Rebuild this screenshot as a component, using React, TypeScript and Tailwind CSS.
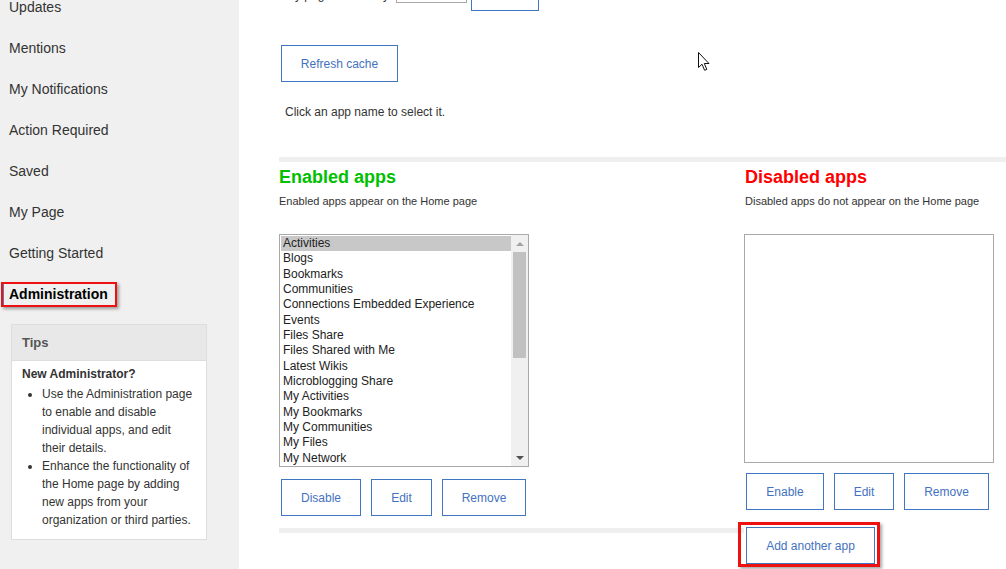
import React from "react";

const navItems = [
  "Updates",
  "Mentions",
  "My Notifications",
  "Action Required",
  "Saved",
  "My Page",
  "Getting Started",
];

const apps = [
  "Activities",
  "Blogs",
  "Bookmarks",
  "Communities",
  "Connections Embedded Experience",
  "Events",
  "Files Share",
  "Files Shared with Me",
  "Latest Wikis",
  "Microblogging Share",
  "My Activities",
  "My Bookmarks",
  "My Communities",
  "My Files",
  "My Network",
];

const btn =
  "h-[37px] border border-[#4176c0] bg-white text-[12px] text-[#4472c0] flex items-center justify-center shrink-0";

export default function App() {
  return (
    <div
      className="flex h-[569px] w-[1006px] overflow-hidden bg-white text-[#333]"
      style={{ fontFamily: '"Liberation Sans", Arial, sans-serif' }}
    >
      {/* Sidebar */}
      <aside className="w-[239px] shrink-0 bg-[#f0f0f0]">
        <div className="mt-[-13px]">
          {navItems.map((n) => (
            <div key={n} className="h-[41px] flex items-center pl-[9px] text-[14px] text-[#333]">
              {n}
            </div>
          ))}
        </div>
        <div className="mt-[8px] ml-[1px] w-[116px] h-[25px] border-2 border-[#ee1111] shadow-[2px_2px_3px_rgba(0,0,0,0.35)] flex items-center">
          <div className="h-full w-[1px] bg-[#5a78b0]" />
          <span className="ml-[5px] text-[14px] font-bold text-black">Administration</span>
        </div>
        <div className="mt-[17px] ml-[11px] w-[196px] border border-[#dddddd] bg-white">
          <div className="h-[36px] bg-[#e8e8e8] border-b border-[#dddddd] flex items-center pl-[10px] text-[13px] font-bold text-[#555]">
            Tips
          </div>
          <div className="pl-[10px] pr-[13px] pt-[4px] pb-[10px] text-[12px] leading-[18px] text-[#333]">
            <div className="font-bold">New Administrator?</div>
            <ul className="mt-[2px] list-disc pl-[20px]">
              <li>
                Use the Administration page to enable and disable individual apps, and edit their details.
              </li>
              <li>
                Enhance the functionality of the Home page by adding new apps from your organization or third
                parties.
              </li>
            </ul>
          </div>
        </div>
      </aside>

      {/* Main */}
      <main className="relative flex-1 bg-white">
        <div className="pl-[40px]">
          {/* partially visible top row */}
          <div className="mt-[-26px] h-[37px] flex items-end">
            <span className="ml-[6px] w-[111px] mb-[9px] text-[12px] leading-[14px] whitespace-nowrap">
              My page load delay:
            </span>
            <div className="mb-[8px] w-[71px] h-[22px] border border-[#a9a9a9] bg-white" />
            <div className={btn + " ml-[4px] w-[68px]"} />
          </div>

          <div className={btn + " mt-[34px] ml-[2px] w-[117px]"}>Refresh cache</div>

          <p className="mt-[23px] ml-[6px] text-[12px] leading-[14px] text-[#333]">
            Click an app name to select it.
          </p>

          <div className="mt-[38px] h-[5px] bg-[#efefef]" />

          <div className="flex">
            {/* Enabled */}
            <div className="w-[465px] shrink-0">
              <h2 className="mt-[4px] h-[22px] leading-[22px] text-[18px] font-bold text-[#00c000]">
                Enabled apps
              </h2>
              <p className="mt-[7px] text-[11px] leading-[13px] text-[#333]">
                Enabled apps appear on the Home page
              </p>
              <div className="mt-[26px] w-[250px] h-[233px] border border-[#a9a9a9] bg-white flex">
                <div className="flex-1 pt-[1px] pl-[1px]">
                  {apps.map((a, i) => (
                    <div
                      key={a}
                      className={
                        "h-[15.33px] leading-[15.33px] pl-[2px] text-[12px] text-[#222] whitespace-nowrap " +
                        (i === 0 ? "bg-[#c8c8c8]" : "")
                      }
                    >
                      {a}
                    </div>
                  ))}
                </div>
                <div className="w-[17px] h-full bg-[#f0f0f0] flex flex-col">
                  <div className="h-[17px] flex items-center justify-center">
                    <div className="w-0 h-0 border-l-[4px] border-r-[4px] border-b-[4px] border-l-transparent border-r-transparent border-b-[#a3a3a3]" />
                  </div>
                  <div className="ml-[2px] w-[13px] h-[106px] bg-[#c1c1c1]" />
                  <div className="flex-1" />
                  <div className="h-[17px] flex items-center justify-center">
                    <div className="w-0 h-0 border-l-[4px] border-r-[4px] border-t-[4px] border-l-transparent border-r-transparent border-t-[#505050]" />
                  </div>
                </div>
              </div>
              <div className="mt-[12px] flex">
                <div className={btn + " ml-[2px] w-[80px]"}>Disable</div>
                <div className={btn + " ml-[10px] w-[61px]"}>Edit</div>
                <div className={btn + " ml-[10px] w-[84px]"}>Remove</div>
              </div>
              <div className="mt-[12px] h-[5px] bg-[#efefef]" />
            </div>

            {/* Disabled */}
            <div className="flex-1">
              <h2 className="mt-[4px] ml-[1px] h-[22px] leading-[22px] text-[18px] font-bold text-[#ff0000]">
                Disabled apps
              </h2>
              <p className="mt-[7px] ml-[1px] text-[11px] leading-[13px] text-[#333]">
                Disabled apps do not appear on the Home page
              </p>
              <div className="mt-[26px] w-[250px] h-[229px] border border-[#a9a9a9] bg-white" />
              <div className="mt-[10px] flex">
                <div className={btn + " ml-[2px] w-[78px]"}>Enable</div>
                <div className={btn + " ml-[10px] w-[60px]"}>Edit</div>
                <div className={btn + " ml-[10px] w-[85px]"}>Remove</div>
              </div>
              <div className="relative mt-[17px] ml-[2px] w-[129px]">
                <div className={btn + " w-[129px]"}>Add another app</div>
                <div className="absolute -left-[8px] -top-[5px] -right-[5px] -bottom-[3px] border-[3px] border-[#ee1111] shadow-[2px_2px_3px_rgba(0,0,0,0.35)] pointer-events-none" />
              </div>
            </div>
          </div>
        </div>

        {/* mouse cursor */}
        <svg
          className="absolute left-[459px] top-[52px]"
          width="13"
          height="20"
          viewBox="0 0 13 20"
        >
          <path
            d="M0.5 0.5 L0.5 15.5 L4 12.2 L6.6 18.3 L8.8 17.4 L6.3 11.5 L11 11.5 Z"
            fill="#ffffff"
            stroke="#111111"
            strokeWidth="1"
            strokeLinejoin="miter"
          />
        </svg>
      </main>
    </div>
  );
}
